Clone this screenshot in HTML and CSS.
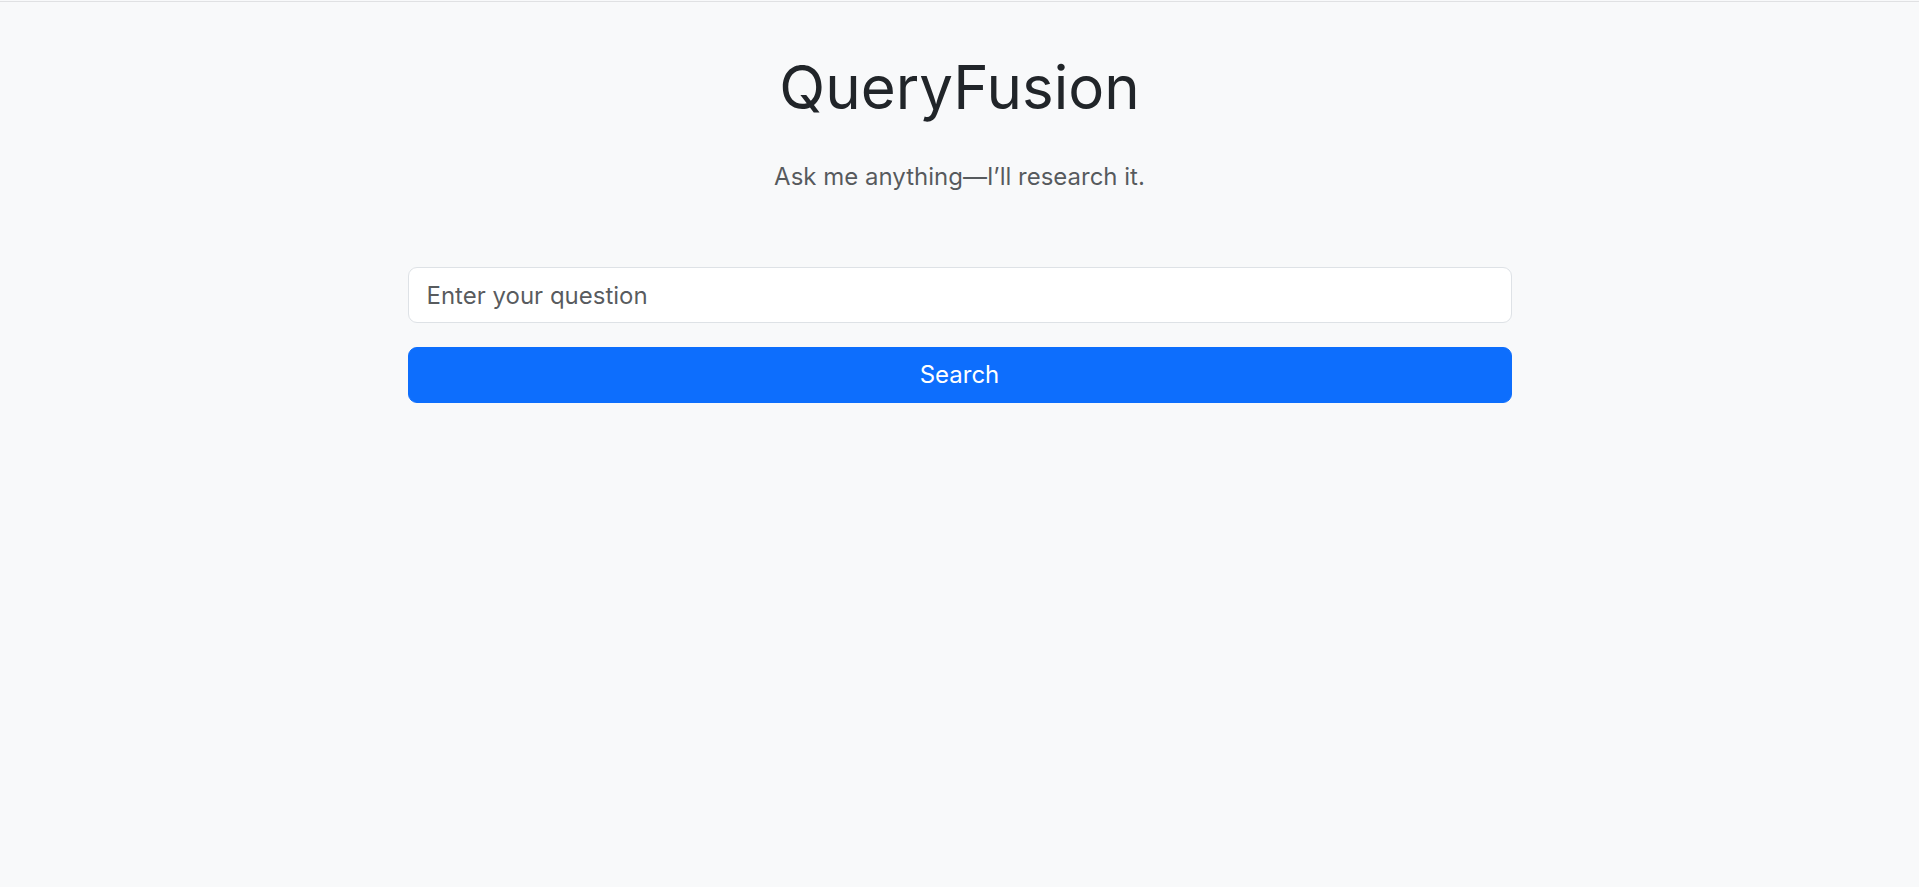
FILE: index.html
```html
<!DOCTYPE html>
<html lang="en">
<head>
<meta charset="utf-8">
<title>QueryFusion</title>
<link rel="stylesheet" href="styles.css">
</head>
<body>
<div class="topline"></div>
<main class="page">
  <header class="hero">
    <h1 class="title">QueryFusion</h1>
    <p class="lead">Ask me anything—I’ll research it.</p>
  </header>
  <form class="search" onsubmit="return false;">
    <input class="field" type="text" placeholder="Enter your question">
    <button class="btn" type="submit">Search</button>
  </form>
</main>
</body>
</html>
```

FILE: styles.css
```css
html, body {
  margin: 0;
  padding: 0;
  background: #f8f9fa;
  font-family: Inter, "Noto Sans", "Liberation Sans", sans-serif;
  color: #212529;
}
.topline {
  margin-top: 1px;
  border-top: 1px solid #e0e1e3;
}
.page {
  max-width: 1104px;
  margin: 0 auto;
  display: flex;
  flex-direction: column;
}
.hero {
  display: flex;
  flex-direction: column;
  align-items: center;
  text-align: center;
}
.title {
  margin: 49px 0 0;
  font-size: 60px;
  font-weight: 400;
  line-height: 1.2;
  color: #212529;
}
.lead {
  margin: 36px 0 0;
  font-size: 24px;
  line-height: 1.5;
  color: rgba(33, 37, 41, 0.75);
}
.search {
  margin-top: 72px;
  display: flex;
  flex-direction: column;
  gap: 24px;
}
.field {
  box-sizing: border-box;
  height: 56px;
  padding: 9px 18px;
  font-family: inherit;
  font-size: 24px;
  line-height: 1.5;
  color: #212529;
  background: #fff;
  border: 1px solid #dee2e6;
  border-radius: 9px;
  outline: none;
}
.field::placeholder {
  color: rgba(33, 37, 41, 0.75);
}
.btn {
  box-sizing: border-box;
  height: 56px;
  font-family: inherit;
  font-size: 24px;
  line-height: 1.5;
  color: #fff;
  background: #0d6efd;
  border: 1px solid #0d6efd;
  border-radius: 9px;
  cursor: pointer;
}
```
